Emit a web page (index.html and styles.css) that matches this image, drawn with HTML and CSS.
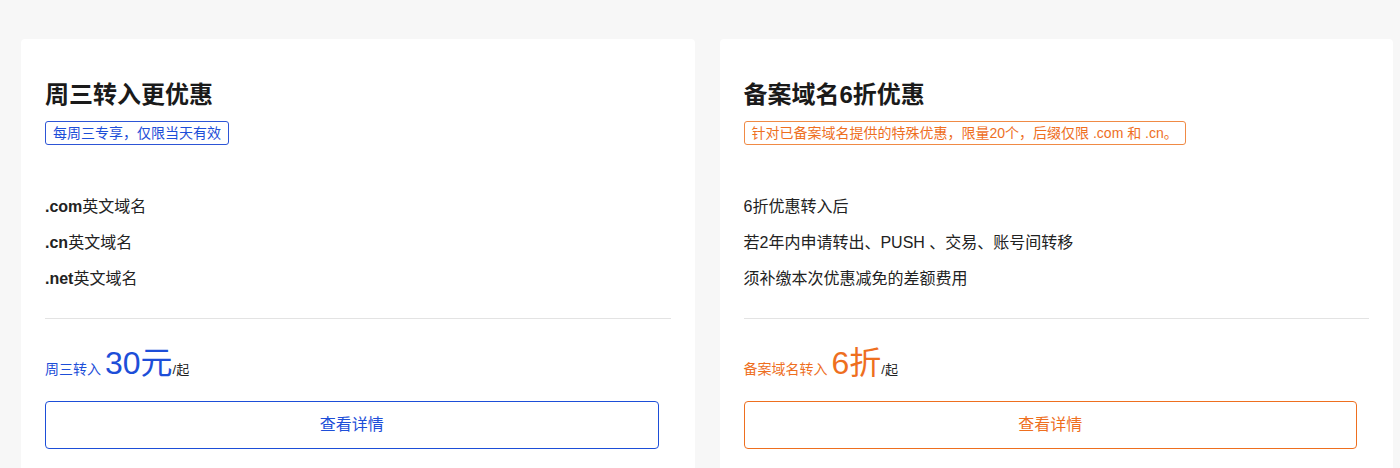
FILE: index.html
```html
<!DOCTYPE html>
<html lang="zh-CN">
<head>
<meta charset="utf-8">
<link rel="stylesheet" href="styles.css">
</head>
<body>
<div class="wrap">
  <div class="card blue">
    <h2 class="title">周三转入更优惠</h2>
    <div class="tagrow"><span class="tag">每周三专享，仅限当天有效</span></div>
    <ul class="list">
      <li><b>.com</b>英文域名</li>
      <li><b>.cn</b>英文域名</li>
      <li><b>.net</b>英文域名</li>
    </ul>
    <div class="divider"></div>
    <div class="price"><span class="plabel">周三转入</span><span class="pnum">30元</span><span class="punit">/起</span></div>
    <a class="btn">查看详情</a>
  </div>
  <div class="card orange">
    <h2 class="title">备案域名6折优惠</h2>
    <div class="tagrow"><span class="tag">针对已备案域名提供的特殊优惠，限量20个，后缀仅限 .com 和 .cn。</span></div>
    <ul class="list">
      <li>6折优惠转入后</li>
      <li>若2年内申请转出、PUSH 、交易、账号间转移</li>
      <li>须补缴本次优惠减免的差额费用</li>
    </ul>
    <div class="divider"></div>
    <div class="price"><span class="plabel">备案域名转入</span><span class="pnum">6折</span><span class="punit">/起</span></div>
    <a class="btn">查看详情</a>
  </div>
</div>
</body>
</html>
```
FILE: styles.css
```css
html, body {
  margin: 0;
  padding: 0;
  background: #f7f7f7;
  font-family: "Liberation Sans", "Noto Sans CJK SC", sans-serif;
  color: #222;
}
.wrap {
  display: flex;
  gap: 25px;
  padding: 39px 7px 0 21px;
  height: 468px;
  box-sizing: border-box;
}
.card {
  flex: 1;
  background: #fff;
  border-radius: 4px 4px 0 0;
  padding: 40px 24px 0 24px;
  box-sizing: border-box;
}
.title {
  margin: 0;
  font-size: 24px;
  line-height: 32px;
  font-weight: 700;
  color: #1a1a1a;
}
.tagrow {
  margin-top: 10px;
  display: flex;
}
.tag {
  font-size: 14px;
  line-height: 22px;
  padding: 0 7px;
  border: 1px solid;
  border-radius: 3px;
}
.blue .tag { color: #1d4ed8; border-color: #2d55d6; }
.orange .tag { color: #ee6f1f; border-color: #f08a45; }
.list {
  list-style: none;
  margin: 44px 0 0 0;
  padding: 0;
}
.list li {
  font-size: 16px;
  line-height: 36px;
  color: #222;
}
.list b { font-weight: 700; }
.divider {
  height: 1px;
  background: #e3e3e3;
  margin-top: 21px;
}
.price {
  margin-top: 23px;
  display: flex;
  align-items: baseline;
  height: 42px;
}
.plabel { font-size: 14px; margin-right: 4px; }
.pnum { font-size: 32px; line-height: 42px; }
.punit { font-size: 13px; color: #222; }
.blue .plabel, .blue .pnum { color: #1d4ed8; }
.orange .plabel, .orange .pnum { color: #ee6f1f; }
.btn {
  display: block;
  width: calc(100% - 12px);
  box-sizing: border-box;
  margin-top: 17px;
  height: 48px;
  line-height: 46px;
  text-align: center;
  font-size: 16px;
  border: 1px solid;
  border-radius: 4px;
}
.blue .btn { color: #1d4ed8; border-color: #1d4ed8; }
.orange .btn { color: #ee6f1f; border-color: #ee6f1f; }
```
